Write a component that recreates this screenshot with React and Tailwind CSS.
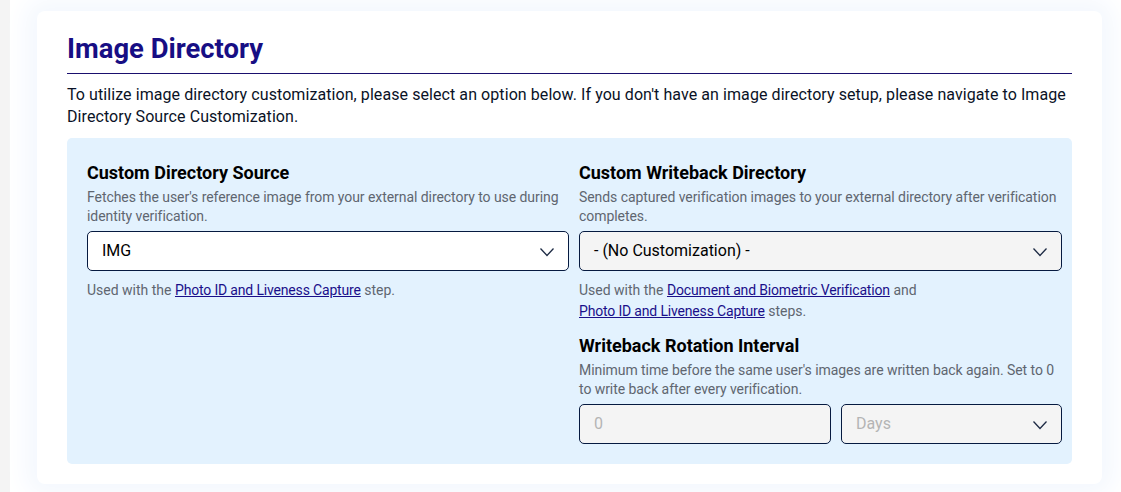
const Chevron = () => (
  <svg width="16" height="10" viewBox="0 0 16 10" fill="none" className="mt-[1px] shrink-0 text-[#1d2a44]">
    <path d="M1.5 1.5 L8 8.5 L14.5 1.5" stroke="currentColor" strokeWidth="1.3" />
  </svg>
);

const Select = ({ value, disabled, muted, className = "" }) => (
  <div
    className={`flex h-10 items-center justify-between rounded-[5px] border border-[#061a40] pl-[14px] pr-[13px] text-[16px] ${
      disabled ? "bg-[#f4f4f4]" : "bg-white"
    } ${muted ? "text-[#b4b4b4]" : "text-black"} ${className}`}
  >
    <span>{value}</span>
    <Chevron />
  </div>
);

const Heading = ({ children }) => (
  <h3 className="text-[18px] font-bold leading-[24px] text-black">{children}</h3>
);

const Desc = ({ children }) => (
  <p className="mb-[5px] mt-[3px] text-[14px] leading-[19px] tracking-[-0.06px] text-[#5f6670]">{children}</p>
);

const Link = ({ children }) => (
  <a href="#" className="tracking-[-0.17px] text-[#1a0f8a] underline">
    {children}
  </a>
);

export default function App() {
  return (
    <div className="flex h-[492px] w-[1121px] overflow-hidden bg-white font-['Roboto',sans-serif]">
      <div className="w-[10px] shrink-0 bg-[#f4f4f4]" />
      <main className="flex-1 pl-[27px] pr-[19px] pt-[11px]">
        <section className="h-[473px] rounded-[8px] bg-white px-[30px] pt-[20px] shadow-[0_0_24px_12px_#f4f8fe]">
          <h2 className="h-[43px] border-b border-[#1a0f6e] text-[27.4px] font-bold leading-[36px] text-[#170e84]">
            Image Directory
          </h2>
          <p className="mt-[10px] text-[16px] leading-[22px] tracking-[0.075px] text-[#0a1226]">
            To utilize image directory customization, please select an option below. If you don't have an image directory setup, please navigate to Image Directory Source Customization.
          </p>
          <div className="mt-[10px] grid h-[326px] grid-cols-[482px_483px] gap-x-[10px] rounded-[5px] bg-[#e3f2fe] pl-[20px] pr-[10px] pt-[23px]">
            <div>
              <Heading>Custom Directory Source</Heading>
              <Desc>
                Fetches the user's reference image from your external directory to use during identity verification.
              </Desc>
              <Select value="IMG" />
              <p className="mt-[9px] text-[14px] leading-[21px] text-[#5f6670]">
                Used with the <Link>Photo ID and Liveness Capture</Link> step.
              </p>
            </div>
            <div>
              <Heading>Custom Writeback Directory</Heading>
              <Desc>
                Sends captured verification images to your external directory after verification completes.
              </Desc>
              <Select value="- (No Customization) -" disabled />
              <p className="mt-[9px] text-[14px] leading-[21px] text-[#5f6670]">
                Used with the <Link>Document and Biometric Verification</Link> and
                <br />
                <Link>Photo ID and Liveness Capture</Link> steps.
              </p>
              <div className="mt-[12px]">
                <Heading>Writeback Rotation Interval</Heading>
                <Desc>
                  Minimum time before the same user's images are written back again. Set to 0 to write back after every verification.
                </Desc>
                <div className="flex gap-[10px]">
                  <div className="flex h-10 w-[252px] items-center rounded-[5px] border border-[#061a40] bg-[#f4f4f4] pl-[14px] text-[16px] text-[#b4b4b4]">
                    0
                  </div>
                  <Select value="Days" disabled muted className="flex-1" />
                </div>
              </div>
            </div>
          </div>
        </section>
      </main>
    </div>
  );
}
